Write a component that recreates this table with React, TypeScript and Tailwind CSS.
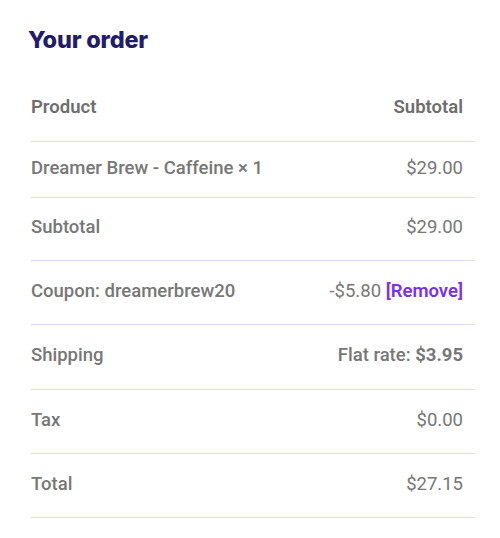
import React from "react";

const rowBase =
  "flex items-center justify-between border-b border-[#dddaf6] pr-3 pb-[2px] text-[18.5px]";

export default function App() {
  return (
    <div
      className="min-h-[538px] w-[500px] bg-white pl-[28px] pt-[26px]"
      style={{ fontFamily: "Roboto, 'Liberation Sans', sans-serif" }}
    >
      <h2
        className="text-[23.5px] font-extrabold leading-[28px] tracking-[-0.2px] text-[#221c6b]"
        style={{ fontFamily: "Inter, 'Liberation Sans', sans-serif" }}
      >
        Your order
      </h2>
      <div className="mt-[22px] ml-[3px] w-[444px]">
        <div className={`${rowBase} h-[66px] font-semibold text-[#6e6e6e]`}>
          <span>Product</span>
          <span>Subtotal</span>
        </div>
        <div className={`${rowBase} h-[56px] text-[#777777]`}>
          <span className="font-medium">Dreamer Brew - Caffeine × 1</span>
          <span>$29.00</span>
        </div>
        <div className={`${rowBase} h-[63px] text-[#777777]`}>
          <span className="font-medium">Subtotal</span>
          <span>$29.00</span>
        </div>
        <div className={`${rowBase} h-[64px] text-[#777777]`}>
          <span className="font-medium">Coupon: dreamerbrew20</span>
          <span>
            -$5.80{" "}
            <a className="font-semibold text-[#7b2ff5]">[Remove]</a>
          </span>
        </div>
        <div className={`${rowBase} h-[65px] text-[#777777]`}>
          <span className="font-medium">Shipping</span>
          <span className="font-medium">
            Flat rate: <span className="font-bold">$3.95</span>
          </span>
        </div>
        <div className={`${rowBase} h-[64px] text-[#777777]`}>
          <span className="font-medium">Tax</span>
          <span>$0.00</span>
        </div>
        <div className={`${rowBase} h-[64px] text-[#777777]`}>
          <span className="font-medium">Total</span>
          <span>$27.15</span>
        </div>
      </div>
    </div>
  );
}
